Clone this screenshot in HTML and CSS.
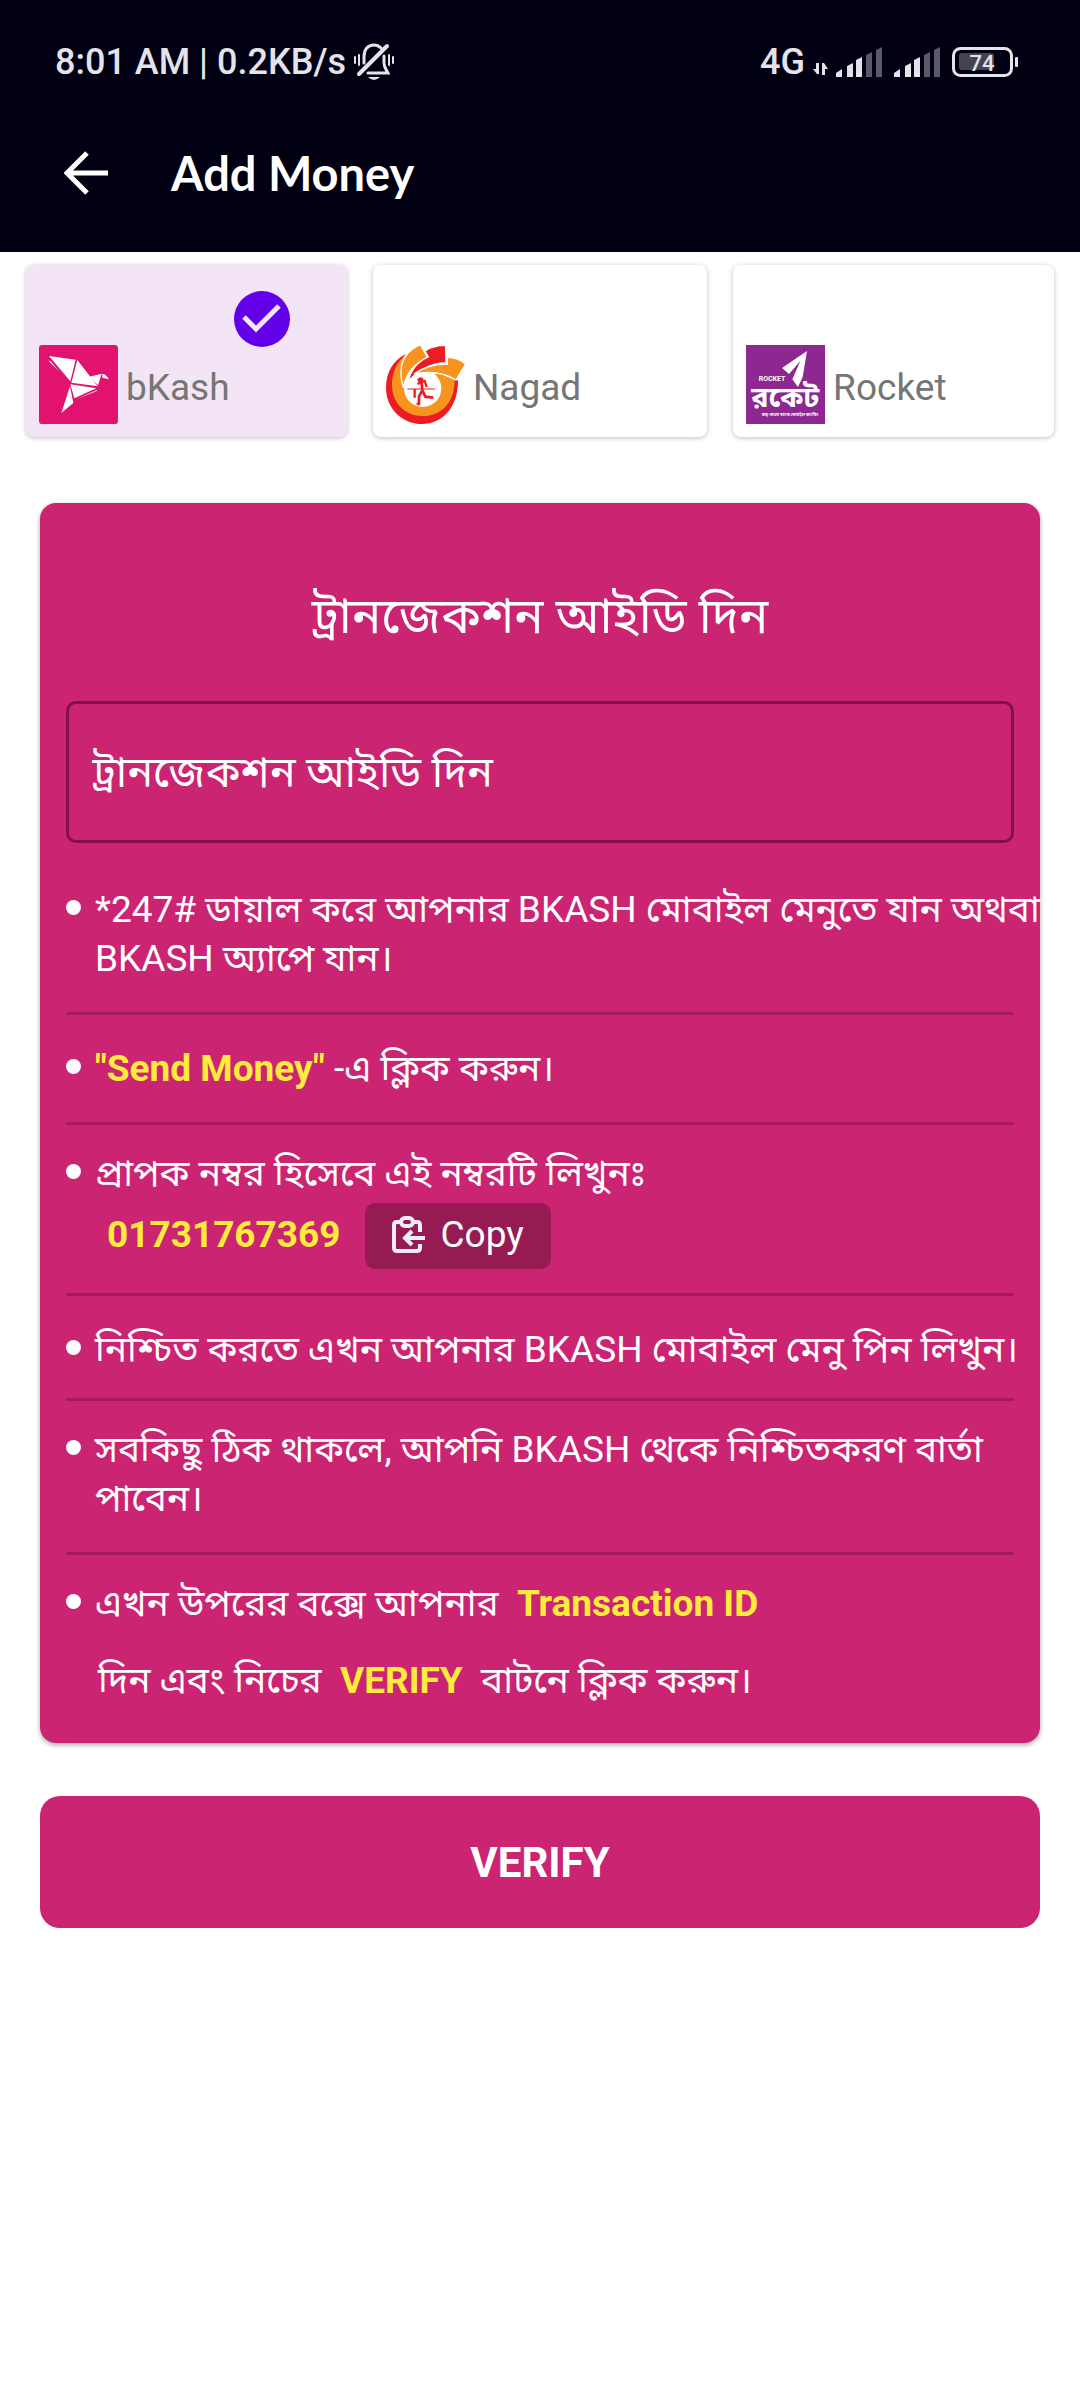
FILE: index.html
```html
<!DOCTYPE html>
<html lang="bn">
<head>
<meta charset="utf-8">
<meta name="viewport" content="width=device-width, initial-scale=1">
<title>Add Money</title>
<link rel="stylesheet" href="styles.css">
</head>
<body>
<header class="top">
  <div class="status">
    <div class="status-left">
      <span>8:01 AM | 0.2KB/s</span>
      <svg class="bell" viewBox="0 0 42 38" aria-hidden="true">
        <g fill="none" stroke="#e4e3ea" stroke-width="3" stroke-linecap="round">
          <path d="M11 20V14C11 6 15 2 21 2C24 2 26 3 28 5M31 13V20C31 24 33 26 35 30H15"/>
          <path d="M6 31L34 3" stroke-width="4"/>
          <path d="M2 14V20M6 12V22M36 12V22M40 14V20" stroke-width="2"/>
        </g>
        <path d="M15 34H27Q21 40 15 34Z" fill="#e4e3ea"/>
      </svg>
    </div>
    <div class="status-right">
      <span>4G</span>
      <svg class="data" viewBox="0 0 15 12" aria-hidden="true"><path d="M6 0V11H4L0 6H3V0ZM9 12V0H11L15 6H12V12Z" fill="#e4e3ea"/></svg>
      <svg class="signal" viewBox="0 0 46 30" aria-hidden="true">
        <path d="M0 30V26L6 22V30ZM11 30V19L17 16V30ZM20 30V13L26 10V30Z" fill="#e4e3ea"/>
        <path d="M30 30V8L36 5V30ZM40 30V3L46 0V30Z" fill="#5b5967"/>
      </svg>
      <svg class="signal" viewBox="0 0 46 30" aria-hidden="true">
        <path d="M0 30V26L6 22V30ZM11 30V19L17 16V30ZM20 30V13L26 10V30Z" fill="#e4e3ea"/>
        <path d="M30 30V8L36 5V30ZM40 30V3L46 0V30Z" fill="#5b5967"/>
      </svg>
      <svg class="battery" viewBox="0 0 66 30" role="img" aria-label="Battery">
        <rect x="1.500" y="1.500" width="58" height="27" rx="7" fill="none" stroke="#e4e3ea" stroke-width="3"/>
        <rect x="7" y="6" width="35" height="17" rx="3" fill="#454350"/>
        <rect x="63" y="10" width="3" height="10" rx="1" fill="#e4e3ea"/>
        <text x="30" y="24" text-anchor="middle" class="battery-text">74</text>
      </svg>
    </div>
  </div>
  <div class="bar">
    <button class="back" type="button" aria-label="Back">
      <svg viewBox="0 0 44 44" aria-hidden="true"><path d="M23 2L3 22L23 42M3 22H44" fill="none" stroke="#fff" stroke-width="5"/></svg>
    </button>
    <h1 class="title">Add Money</h1>
  </div>
</header>

<main>
  <div class="methods" role="radiogroup" aria-label="Method">
    <label class="method">
      <span class="pick">
        <input type="radio" name="method" checked>
        <svg class="tick" viewBox="0 0 56 56" aria-hidden="true"><circle cx="28" cy="28" r="28" fill="#6200ea"/><path d="M10 26L22 38L45 15" fill="none" stroke="#f3e5f5" stroke-width="5"/></svg>
      </span>
      <span class="brand">
        <svg class="logo" viewBox="0 0 237 237" aria-hidden="true">
          <rect width="237" height="237" rx="10" fill="#e2136e"/>
          <g fill="#fff">
            <path d="M30 33L110 44L94 109ZM115 45L176 124L97 113ZM94 118L172 130L106 160ZM93 124L103 174L67 204Z"/>
            <path d="M151 95L188 86L177 121ZM190 86Q202 88 210 103L190 98ZM28 47L34 48L60 78ZM112 163L175 134L172 139Z"/>
          </g>
        </svg>
        <span>bKash</span>
      </span>
    </label>
    <label class="method">
      <span class="pick">
        <input type="radio" name="method">
        <svg class="tick" viewBox="0 0 56 56" aria-hidden="true"><circle cx="28" cy="28" r="28" fill="#6200ea"/><path d="M10 26L22 38L45 15" fill="none" stroke="#f3e5f5" stroke-width="5"/></svg>
      </span>
      <span class="brand">
        <svg class="logo" viewBox="0 0 237 237" aria-hidden="true">
          <path d="M59 28C20 46 0 85 0 128C0 190 48 237 108 237C168 237 216 190 216 106L205 104L110 130L46 120Z" fill="#ed1c24"/>
          <path d="M59 28C30 55 18 85 18 120C18 175 58 213 110 213C165 213 206 175 206 104L152 82L110 130L50 126Z" fill="#f7941d"/>
          <circle cx="110" cy="130" r="56" fill="#fff"/>
          <g stroke="#fff" stroke-width="4">
            <path d="M103 -1C55 20 32 60 52 128C60 85 85 55 125 38Z" fill="#f7941d"/>
            <path d="M117 18C135 5 155 1 179 1L180 54C135 53 100 73 66 110C75 75 98 48 127 36Z" fill="#ed1c24"/>
            <path d="M184 37C207 37 222 44 239 57L210 105C175 83 130 78 84 87C115 65 145 57 184 57Z" fill="#f7941d"/>
          </g>
          <g fill="none" stroke="#ed1c24">
            <path d="M64 132H147" stroke-width="3"/>
            <path d="M106 108L109 136M109 136L118 155L142 158M108 138L99 154V177H92" stroke-width="8"/>
            <path d="M94 117L116 108L122 126M86 132V158" stroke-width="7"/>
          </g>
          <path d="M94 103Q103 91 113 102L110 112H97Z" fill="#ed1c24"/>
        </svg>
        <span>Nagad</span>
      </span>
    </label>
    <label class="method">
      <span class="pick">
        <input type="radio" name="method">
        <svg class="tick" viewBox="0 0 56 56" aria-hidden="true"><circle cx="28" cy="28" r="28" fill="#6200ea"/><path d="M10 26L22 38L45 15" fill="none" stroke="#f3e5f5" stroke-width="5"/></svg>
      </span>
      <span class="brand">
        <svg class="logo" viewBox="0 0 237 237" aria-hidden="true">
          <rect width="237" height="237" fill="#8c288f"/>
          <path d="M183 18L108 69L129 87L163 48L139 103L156 126L170 96Z" fill="#fff"/>
          <text x="38" y="108" class="rocket-en">ROCKET</text>
          <text x="118" y="186" text-anchor="middle" class="rocket-bn">রকেট</text>
          <text x="132" y="214" text-anchor="middle" class="rocket-sub">ডাচ্-বাংলা ব্যাংক মোবাইল ব্যাংকিং</text>
        </svg>
        <span>Rocket</span>
      </span>
    </label>
  </div>

  <form class="form">
    <section class="card">
      <h2 class="heading"><label for="trx">ট্রানজেকশন আইডি দিন</label></h2>
      <input class="field" id="trx" type="text" placeholder="ট্রানজেকশন আইডি দিন">
      <ul class="steps">
        <li class="step loose">*247# ডায়াল করে আপনার BKASH মোবাইল মেনুতে যান অথবা<br>BKASH অ্যাপে যান।</li>
        <li class="step loose"><b>"Send Money"</b> -এ ক্লিক করুন।</li>
        <li class="step">প্রাপক নম্বর হিসেবে এই নম্বরটি লিখুনঃ
          <div class="number">
            <b>01731767369</b>
            <button class="copy" type="button">
              <svg viewBox="0 0 33 38" aria-hidden="true"><g fill="none" stroke="#f1ecfb" stroke-width="4"><path d="M9 6H5Q2 6 2 9V32Q2 35 5 35H25Q28 35 28 32V28M28 16V9Q28 6 25 6H21"/><rect x="9" y="2" width="12" height="8" rx="4"/><path d="M33 22H14M20 15L13 22L20 29"/></g></svg>
              Copy
            </button>
          </div>
        </li>
        <li class="step loose-top">নিশ্চিত করতে এখন আপনার BKASH মোবাইল মেনু পিন লিখুন।</li>
        <li class="step loose-bottom">সবকিছু ঠিক থাকলে, আপনি BKASH থেকে নিশ্চিতকরণ বার্তা<br>পাবেন।</li>
        <li class="step">এখন উপরের বক্সে আপনার &nbsp;<b>Transaction ID</b>
          <p class="more">দিন এবং নিচের &nbsp;<b>VERIFY</b>&nbsp; বাটনে ক্লিক করুন।</p>
        </li>
      </ul>
    </section>
    <button class="verify" type="button">VERIFY</button>
  </form>
</main>
</body>
</html>
```
FILE: styles.css
```css
* { box-sizing: border-box; }

body {
  margin: 0;
  background: #fff;
  font-family: Roboto, "Noto Sans Bengali", "Noto Sans", sans-serif;
  color: #fff;
}

button, input { font: inherit; color: inherit; }
button { border: 0; padding: 0; background: none; }
svg { display: block; flex: none; }

/* Header */
.top { background: #000012; padding: 40px 56px 48px; }
.status {
  display: flex;
  justify-content: space-between;
  align-items: center;
  height: 44px;
  font-size: 36px;
  font-weight: 500;
  color: #e4e3ea;
}
.status-left { display: flex; gap: 7px; align-items: center; margin-left: -1px; }
.status-right { display: flex; gap: 12px; align-items: center; margin-right: 6px; }
.bell { width: 42px; height: 38px; }
.data { width: 15px; height: 12px; margin: 14px -4px 0 -4px; }
.signal { width: 46px; height: 30px; }
.battery { width: 66px; height: 30px; }
.battery-text { font-size: 22px; font-weight: 500; fill: #e4e3ea; }
.bar { display: flex; align-items: center; gap: 63px; padding-left: 8px; margin-top: 58px; }
.back svg { width: 44px; height: 44px; }
.title { margin: 0; font: 700 47px/62px Lato, sans-serif; }

/* Payment methods */
.methods {
  display: grid;
  grid-template-columns: 24fr 25fr 24fr;
  gap: 26px;
  padding: 13px 26px 0;
}
.method {
  display: flex;
  flex-direction: column;
  justify-content: space-between;
  height: 172px;
  padding: 26px 13px 13px;
  border-radius: 8px;
  background: #fff;
  box-shadow: 0 1px 5px rgba(0, 0, 0, 0.25);
  font-size: 37px;
  color: #757575;
}
.method:has(input:checked) { background: #f3e5f5; }
.pick { display: grid; width: 56px; height: 54px; margin: 0 44px 0 auto; }
.pick > * { grid-area: 1 / 1; }
.pick input { appearance: none; width: 56px; height: 56px; margin: 0; }
.tick { width: 56px; height: 56px; visibility: hidden; }
input:checked + .tick { visibility: visible; }
.brand { display: flex; align-items: center; gap: 8px; }
.brand span { line-height: 44px; padding-top: 6px; }
.logo { width: 79px; height: 79px; }
.rocket-en { font-size: 21px; font-weight: 700; fill: #fff; }
.rocket-bn { font-size: 86px; font-weight: 700; fill: #fff; }
.rocket-sub { font-size: 12px; font-weight: 700; fill: #fff; }

/* Instructions */
.form { padding: 66px 40px 40px; }
.card {
  padding: 82px 26px 38px;
  border-radius: 16px;
  background: #cb2472;
  box-shadow: 0 2px 5px rgba(0, 0, 0, 0.35);
}
.heading {
  margin: 0;
  font-size: 49px;
  font-weight: 400;
  line-height: 64px;
  text-align: center;
}
.field {
  display: block;
  width: 100%;
  height: 142px;
  margin-top: 52px;
  padding: 0 23px;
  border: 3px solid #82104c;
  border-radius: 10px;
  background: transparent;
  font-size: 43px;
}
.field::placeholder { color: #fff; opacity: 1; }
.steps { list-style: none; margin: 42px 0 0; padding: 0; font-size: 37px; line-height: 49px; }
.step {
  position: relative;
  padding: 24px 0 24px 29px;
  border-bottom: 3px solid #a81a5e;
  white-space: nowrap;
}
.step::before {
  content: "";
  position: absolute;
  left: 0;
  width: 15px;
  height: 15px;
  margin-top: 15px;
  border-radius: 50%;
  background: #fff;
}
.step:first-child { padding-top: 0; }
.step:last-child { padding-bottom: 0; border-bottom: 0; }
.loose { padding-top: 29px; padding-bottom: 29px; }
.loose-top { padding-top: 29px; }
.loose-bottom { padding-bottom: 29px; }
.step b { font-weight: 700; color: #ffeb3b; }
.number { display: flex; align-items: center; gap: 24px; margin-top: 5px; padding-left: 12px; }
.copy {
  display: flex;
  align-items: center;
  gap: 16px;
  height: 66px;
  padding: 0 27px;
  border-radius: 10px;
  background: #961b52;
}
.number > * { line-height: 64px; }
.number > b, .copy { padding-bottom: 2px; }
.copy svg { width: 33px; height: 38px; }
.more { margin: 28px 0 0; padding-left: 3px; }

.verify {
  display: block;
  width: 100%;
  height: 132px;
  margin-top: 53px;
  border-radius: 20px;
  background: #cb2472;
  font-size: 42px;
  font-weight: 700;
}
```
